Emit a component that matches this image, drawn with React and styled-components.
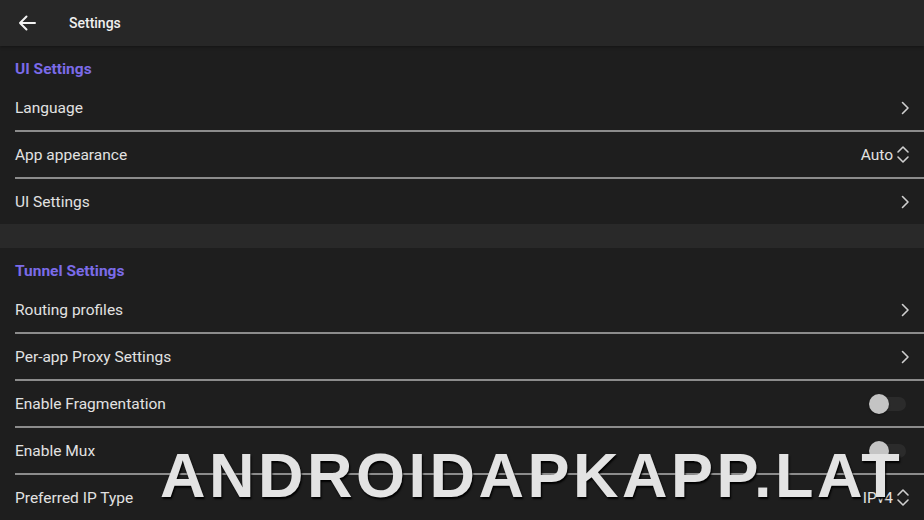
import styled, { createGlobalStyle } from "styled-components";

const GlobalStyle = createGlobalStyle`
  html, body {
    margin: 0;
    padding: 0;
    background: #1e1e1e;
    font-family: Roboto, "Noto Sans", sans-serif;
    overflow: hidden;
  }
`;

const uiSettings = [
  { label: "Language", kind: "link" },
  { label: "App appearance", kind: "select", value: "Auto" },
  { label: "UI Settings", kind: "link" },
];

const tunnelSettings = [
  { label: "Routing profiles", kind: "link" },
  { label: "Per-app Proxy Settings", kind: "link" },
  { label: "Enable Fragmentation", kind: "toggle" },
  { label: "Enable Mux", kind: "toggle" },
  { label: "Preferred IP Type", kind: "select", value: "IPv4" },
];

const BackArrow = () => (
  <svg width="18" height="16" viewBox="0 0 18 16" fill="none">
    <path
      d="M17 8H2M8.5 1.5L2 8l6.5 6.5"
      stroke="#f2f2f2"
      strokeWidth="2"
      strokeLinecap="round"
      strokeLinejoin="round"
    />
  </svg>
);

const Chevron = () => (
  <svg width="9" height="14" viewBox="0 0 9 14" fill="none">
    <path
      d="M1.5 1.5L7 7l-5.5 5.5"
      stroke="#cfcfcf"
      strokeWidth="1.6"
      strokeLinecap="round"
      strokeLinejoin="round"
    />
  </svg>
);

const UpDown = () => (
  <svg width="14" height="19" viewBox="0 0 14 19" fill="none">
    <path
      d="M2 7l5-5 5 5M2 12l5 5 5-5"
      stroke="#cfcfcf"
      strokeWidth="1.6"
      strokeLinecap="round"
      strokeLinejoin="round"
    />
  </svg>
);

const Row = ({ item }) => (
  <RowBox>
    <Label>{item.label}</Label>
    {item.kind === "link" && (
      <Trail>
        <Chevron />
      </Trail>
    )}
    {item.kind === "select" && (
      <Trail>
        <Value>{item.value}</Value>
        <UpDown />
      </Trail>
    )}
    {item.kind === "toggle" && (
      <Switch>
        <Thumb />
      </Switch>
    )}
  </RowBox>
);

const Section = ({ title, items }) => (
  <SectionBox>
    <SectionTitle>{title}</SectionTitle>
    {items.map((item, i) => (
      <div key={item.label}>
        {i > 0 && <Divider />}
        <Row item={item} />
      </div>
    ))}
  </SectionBox>
);

export default function App() {
  return (
    <Page>
      <GlobalStyle />
      <Header>
        <BackButton>
          <BackArrow />
        </BackButton>
        <Title>Settings</Title>
      </Header>
      <Section title="UI Settings" items={uiSettings} />
      <Gap />
      <Section title="Tunnel Settings" items={tunnelSettings} />
      <Watermark>ANDROIDAPKAPP.LAT</Watermark>
    </Page>
  );
}

const Page = styled.div`
  position: relative;
  width: 924px;
  height: 520px;
  overflow: hidden;
  background: #1e1e1e;
`;

const Header = styled.div`
  height: 46px;
  display: flex;
  align-items: center;
  background: #272727;
  box-shadow: 0 1px 3px rgba(0, 0, 0, 0.35);
  position: relative;
  z-index: 1;
`;

const BackButton = styled.div`
  width: 54px;
  padding-left: 18px;
  box-sizing: border-box;
  display: flex;
  align-items: center;
`;

const Title = styled.div`
  margin-left: 15px;
  color: #f0f0f0;
  font-size: 14px;
  font-weight: 500;
`;

const SectionBox = styled.div`
  background: #1e1e1e;
`;

const SectionTitle = styled.div`
  padding: 13px 15px 6px;
  line-height: 20px;
  color: #7b6be8;
  font-size: 15.5px;
  font-weight: 700;
`;

const RowBox = styled.div`
  height: 45px;
  display: flex;
  align-items: center;
  justify-content: space-between;
  padding: 0 14px 0 15px;
`;

const Label = styled.span`
  color: #e2e2e2;
  font-size: 15.5px;
`;

const Trail = styled.div`
  display: flex;
  align-items: center;
  gap: 3px;
`;

const Value = styled.span`
  color: #e2e2e2;
  font-size: 15.5px;
`;

const Divider = styled.div`
  height: 2px;
  margin-left: 15px;
  background: #8c8c8c;
`;

const Gap = styled.div`
  height: 24px;
  background: #292929;
`;

const Switch = styled.div`
  width: 36px;
  height: 14px;
  margin-right: 4px;
  border-radius: 7px;
  background: #2b2b2b;
  display: flex;
  align-items: center;
`;

const Thumb = styled.div`
  width: 20px;
  height: 20px;
  margin-left: -1px;
  border-radius: 50%;
  background: #c4c4c4;
  box-shadow: 0 1px 2px rgba(0, 0, 0, 0.5);
`;

const Watermark = styled.div`
  position: absolute;
  left: 160px;
  top: 440px;
  font-family: "Liberation Sans", Arial, sans-serif;
  font-weight: 700;
  font-size: 63px;
  letter-spacing: 3.5px;
  line-height: 70px;
  color: #e3e3e3;
  text-shadow: 1px 2px 2px #000;
  white-space: nowrap;
`;
